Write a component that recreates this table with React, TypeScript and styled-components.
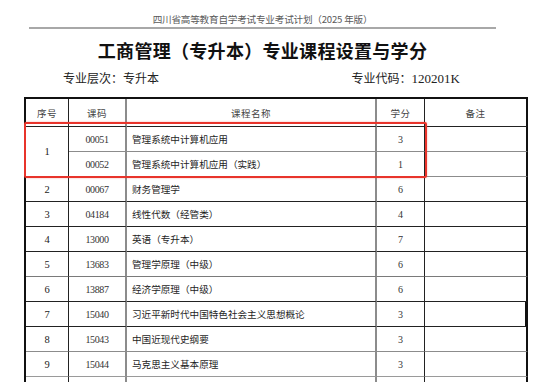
import styled, { createGlobalStyle } from "styled-components";

const Global = createGlobalStyle`
  html, body {
    margin: 0;
    padding: 0;
    background: #fff;
  }
  body {
    width: 550px;
    height: 386px;
    overflow: hidden;
    font-family: "Noto Sans CJK SC", "Noto Sans", sans-serif;
  }
`

type Course = { no?: string; code: string; name: string; credit: string; line: string; edge?: number }

const courses: Course[] = [
  { no: "1", code: "00051", name: "管理系统中计算机应用", credit: "3", line: "#8c8c8c" },
  { code: "00052", name: "管理系统中计算机应用（实践）", credit: "1", line: "#8c8c8c" },
  { no: "2", code: "00067", name: "财务管理学", credit: "6", line: "#222" },
  { no: "3", code: "04184", name: "线性代数（经管类）", credit: "4", line: "#222" },
  { no: "4", code: "13000", name: "英语（专升本）", credit: "7", line: "#222" },
  { no: "5", code: "13683", name: "管理学原理（中级）", credit: "6", line: "#7a7a7a" },
  { no: "6", code: "13887", name: "经济学原理（中级）", credit: "6", line: "#222" },
  { no: "7", code: "15040", name: "习近平新时代中国特色社会主义思想概论", credit: "3", line: "#222", edge: 3 },
  { no: "8", code: "15043", name: "中国近现代史纲要", credit: "3", line: "#8c8c8c" },
  { no: "9", code: "15044", name: "马克思主义基本原理", credit: "3", line: "#9a9a9a" },
  { no: "", code: "", name: "", credit: "", line: "#9a9a9a" },
]

const App = () => {
  return (
    <Page>
      <Global />
      <Head>
        <TopNote>四川省高等教育自学考试专业考试计划（2025 年版）</TopNote>
        <Rule />
        <Title>工商管理（专升本）专业课程设置与学分</Title>
        <SubRow>
          <SubText>专业层次：专升本</SubText>
          <SubText>专业代码：<Num>120201K</Num></SubText>
        </SubRow>
      </Head>

      <Clip>
        <Grid>
          <HeadCell $right="1px solid #222">序号</HeadCell>
          <HeadCell $right="2px solid #8c8c8c">课码</HeadCell>
          <HeadCell $right="2px solid #8c8c8c">课程名称</HeadCell>
          <HeadCell $right="1px solid #222">学分</HeadCell>
          <HeadCell $right="2px solid #111">备注</HeadCell>

          {courses.map((c, i) => (
            <Row key={i} c={c} span={c.no === "1"} />
          ))}
        </Grid>
        <Mark />
      </Clip>
    </Page>
  )
}

const Row = ({ c, span }: { c: Course; span: boolean }) => {
  return (
    <>
      {c.no !== undefined && (
        <NumCell $bottom={span ? "#8c8c8c" : c.line} $span={span ? 2 : 1}>
          {c.no}
        </NumCell>
      )}
      <CodeCell $bottom={c.line}>{c.code}</CodeCell>
      <NameCell $bottom={c.line}>{c.name}</NameCell>
      <CreditCell $bottom={c.line}>{c.credit}</CreditCell>
      <NoteCell $bottom={c.line} $edge={c.edge ?? 2} />
    </>
  )
}

export default App

const Page = styled.div`
  width: 550px;
  height: 386px;
  overflow: hidden;
  padding-top: 12px;
  box-sizing: border-box;
`

const Head = styled.div`
  width: 467px;
  margin-left: 29px;
  display: flex;
  flex-direction: column;
  align-items: stretch;
`

const TopNote = styled.div`
  height: 15px;
  line-height: 14px;
  font-size: 9.6px;
  color: #5a5a5a;
  text-align: center;
  letter-spacing: -0.2px;
`

const Rule = styled.div`
  height: 2px;
  background: #a8a8a8;
`

const Title = styled.div`
  margin-top: 9px;
  height: 24px;
  line-height: 24px;
  font-size: 18px;
  font-weight: 700;
  color: #111;
  text-align: center;
  letter-spacing: 0.3px;
`

const SubRow = styled.div`
  margin-top: 8px;
  height: 16px;
  padding: 0 36px 0 34px;
  display: flex;
  justify-content: space-between;
  align-items: center;
`

const SubText = styled.span`
  font-size: 12px;
  line-height: 16px;
  color: #222;
`

const Num = styled.span`
  font-family: "Liberation Serif", serif;
  font-size: 13px;
`

const Clip = styled.div`
  position: relative;
  margin-top: 11px;
  margin-left: 24px;
  width: 504px;
  height: 285px;
  overflow: hidden;
`

const Grid = styled.div`
  display: grid;
  grid-template-columns: 43px 58px 250px 48px 103px;
  grid-template-rows: 28px;
  grid-auto-rows: 25px;
  border-top: 2px solid #111;
  border-left: 2px solid #111;
`

const Cell = styled.div<{ $bottom?: string }>`
  box-sizing: border-box;
  display: flex;
  align-items: center;
  justify-content: center;
  border-bottom: 1px solid ${({ $bottom }) => $bottom ?? "#222"};
  color: #222;
  white-space: nowrap;
`

const HeadCell = styled(Cell)<{ $right: string }>`
  border-right: ${({ $right }) => $right};
  font-size: 9.5px;
  color: #444;
  letter-spacing: 0.5px;
`

const NumCell = styled(Cell)<{ $span: number }>`
  grid-row: span ${({ $span }) => $span};
  border-right: 1px solid #222;
  font-family: "Liberation Serif", serif;
  font-size: 10.5px;
`

const CodeCell = styled(Cell)`
  border-right: 2px solid #8c8c8c;
  font-family: "Liberation Serif", serif;
  font-size: 10px;
  letter-spacing: -0.4px;
  color: #333;
`

const NameCell = styled(Cell)`
  justify-content: flex-start;
  padding-left: 5px;
  border-right: 2px solid #8c8c8c;
  font-size: 9.6px;
  color: #1e1e1e;
`

const CreditCell = styled(Cell)`
  border-right: 1px solid #222;
  font-family: "Liberation Serif", serif;
  font-size: 10px;
  color: #333;
`

const NoteCell = styled(Cell)<{ $edge: number }>`
  border-right: ${({ $edge }) => $edge}px solid #111;
`

const Mark = styled.div`
  position: absolute;
  left: 0;
  top: 25px;
  width: 403px;
  height: 56px;
  box-sizing: border-box;
  border: 2px solid #e8342b;
  border-radius: 2px;
  box-shadow: 0 0 2px rgba(232, 52, 43, 0.45);
  pointer-events: none;
`
